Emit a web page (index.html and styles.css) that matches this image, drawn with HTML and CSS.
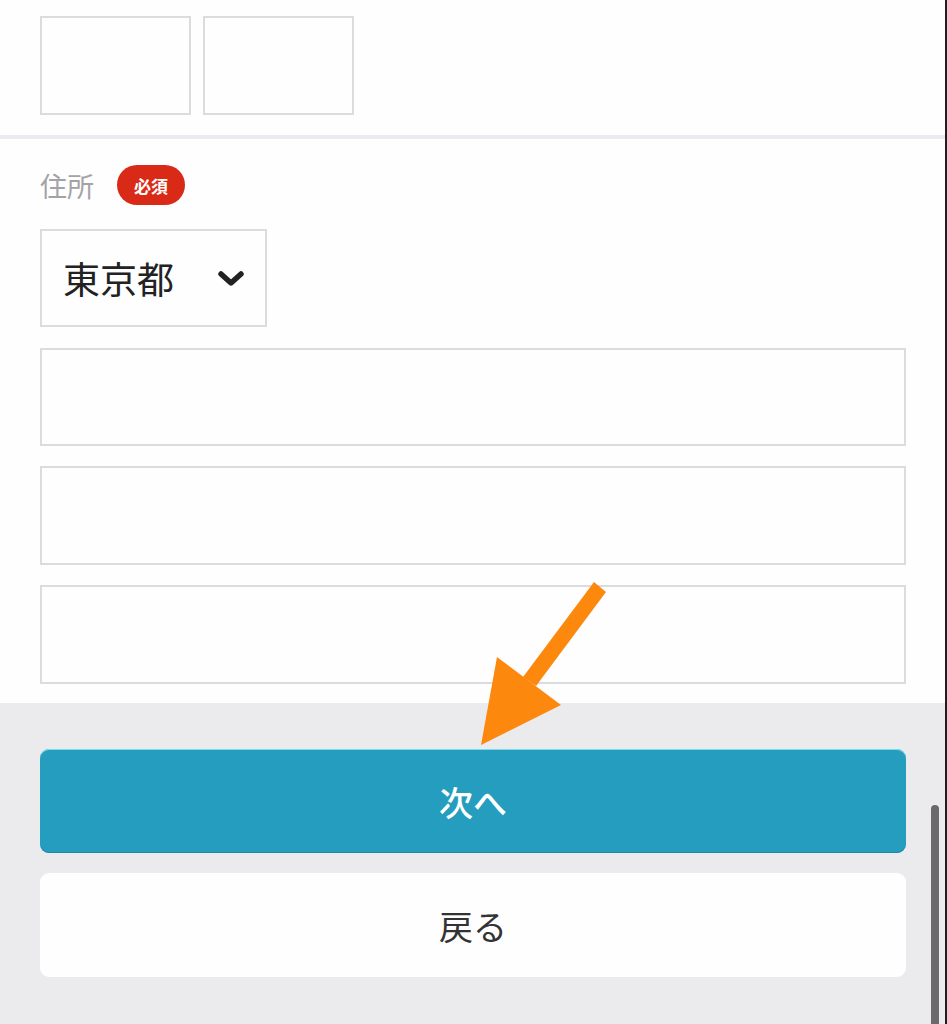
FILE: index.html
```html
<!DOCTYPE html>
<html lang="ja">
<head>
    <meta charset="UTF-8">
    <meta name="viewport" content="width=device-width, initial-scale=1.0">
    <title>お客様情報の入力</title>
    <link rel="stylesheet" href="styles.css">
</head>
<body>
    <div class="page">
        <div class="form-top">
            <div class="photo-row">
                <div class="photo-box"></div>
                <div class="photo-box"></div>
            </div>
        </div>
        <div class="divider"></div>

        <div class="form-section">
            <div class="field-label">
                <span>住所</span>
                <span class="required">必須</span>
            </div>
            <div class="select-box">
                <span>東京都</span>
                <svg class="chevron" width="26" height="16" viewBox="0 0 26 16">
                    <path d="M3 3 L13 12 L23 3" fill="none" stroke="#222" stroke-width="5.5" stroke-linecap="round" stroke-linejoin="round"/>
                </svg>
            </div>
            <div class="text-input"></div>
            <div class="text-input"></div>
            <div class="text-input"></div>
        </div>

        <div class="footer">
            <button class="btn btn-next">次へ</button>
            <button class="btn btn-back">戻る</button>
        </div>

        <!-- annotation arrow drawn over the screenshot -->
        <svg class="arrow" width="947" height="1024" viewBox="0 0 947 1024">
            <polygon points="594,582 606,592 536,686 523,677" fill="#fd880e"/>
            <polygon points="497,657 561,705 481,745" fill="#fd880e"/>
        </svg>
        <div class="scrollbar"></div>
    </div>
</body>
</html>
```

FILE: styles.css
```css
body {
    margin: 0;
    background: #1f1f1f;
    font-family: "Noto Sans CJK JP", "Noto Sans", sans-serif;
}

.page {
    position: relative;
    width: 945px;
    height: 1024px;
    background: #ebeaed;
    overflow: hidden;
}

.form-top {
    background: #fefefe;
    padding: 16px 40px 20px;
}

.photo-row {
    display: flex;
    gap: 12px;
}

.photo-box {
    width: 147px;
    height: 95px;
    border: 2px solid #dcdbde;
}

.divider {
    height: 4px;
    background: #ecebef;
}

.form-section {
    background: #fefefe;
    padding: 26px 39px 19px 40px;
    display: flex;
    flex-direction: column;
}

.field-label {
    display: flex;
    align-items: center;
    gap: 23px;
    height: 40px;
    font-size: 27px;
    color: #a3a2a6;
}

.required {
    display: inline-flex;
    align-items: center;
    justify-content: center;
    width: 68px;
    height: 40px;
    border-radius: 20px;
    background: #d92a18;
    color: #fff;
    font-size: 17px;
    font-weight: bold;
}

.select-box {
    margin-top: 24px;
    height: 94px;
    border: 2px solid #dcdbde;
    display: flex;
    align-items: center;
    justify-content: space-between;
    padding: 0 21px 0 21px;
    box-sizing: content-box;
    width: 181px;
    font-size: 37px;
    color: #222;
}

.chevron {
    display: block;
    margin-top: 2px;
}

.text-input {
    margin-top: 20px;
    height: 95px;
    border: 2px solid #dcdbde;
}

.select-box + .text-input {
    margin-top: 21px;
    height: 94px;
}

.footer {
    padding: 46px 39px 47px 40px;
    display: flex;
    flex-direction: column;
    gap: 20px;
}

.btn {
    height: 104px;
    border: none;
    border-radius: 9px;
    font-family: "Noto Sans CJK JP", "Noto Sans", sans-serif;
    font-size: 34px;
}

.btn-next {
    background: #259dbe;
    color: #fff;
    font-weight: 500;
    box-shadow: inset 0 1px 0 #7fdcef, inset 0 -1px 0 #1d88a6;
}

.btn-back {
    background: #fefefe;
    color: #333;
}

.arrow {
    position: absolute;
    top: 0;
    left: 0;
}

.scrollbar {
    position: absolute;
    left: 931px;
    top: 805px;
    width: 8px;
    height: 230px;
    border-radius: 4px;
    background: #6b696b;
}
```
